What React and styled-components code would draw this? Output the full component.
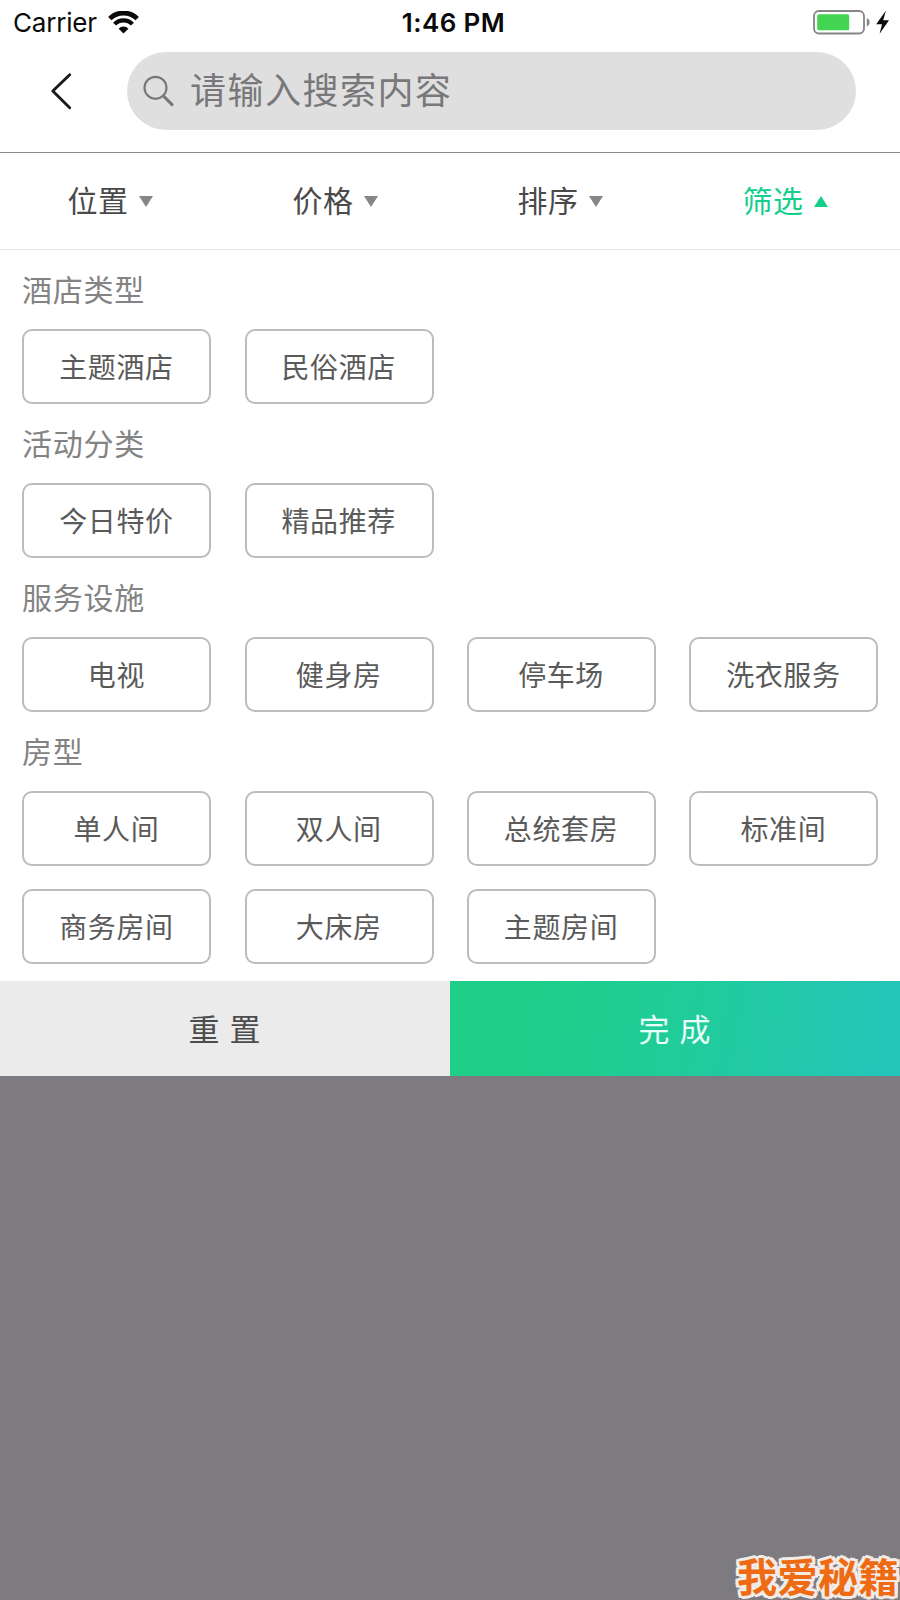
import React from "react";
import styled, { createGlobalStyle } from "styled-components";

const GlobalStyle = createGlobalStyle`
  * { box-sizing: border-box; }
  body {
    margin: 0;
    background: #7d7b80;
    font-family: "Noto Sans CJK SC", sans-serif;
  }
  button { font: inherit; margin: 0; padding: 0; border: 0; background: none; }
`;

const Screen = styled.div`
  position: relative;
  display: flex;
  flex-direction: column;
  width: 900px;
  height: 1600px;
  overflow: hidden;
  background: #7d7b80;
`;

const StatusBar = styled.header`
  display: grid;
  grid-template-columns: 1fr auto 1fr;
  align-items: center;
  height: 44px;
  padding: 0 10px 0 13px;
  background: #fff;
  color: #0a0a0a;
  font: 400 26px/44px Inter, sans-serif;
`;

const StatusText = styled.span`
  padding-top: 1px;
  height: 44px;
`;

const Carrier = styled.div`
  display: flex;
  align-items: center;
  gap: 11px;
  letter-spacing: -0.2px;
`;

const Clock = styled(StatusText)`
  font-weight: 600;
  letter-spacing: 0.4px;
  padding-left: 4px;
`;

const Power = styled.div`
  display: flex;
  justify-content: flex-end;
`;

const NavBar = styled.nav`
  display: flex;
  align-items: center;
  height: 109px;
  padding: 8px 44px 22px 50px;
  border-bottom: 1px solid #8a8a8a;
  background: #fff;
`;

const BackButton = styled.button`
  display: flex;
  width: 76.5px;
`;

const SearchField = styled.div`
  display: flex;
  align-items: center;
  flex: 1;
  height: 78px;
  padding-left: 16.5px;
  gap: 15px;
  border-radius: 39px;
  background: #dfdfdf;
  color: #78787a;
  font-size: 36px;
  line-height: 72px;
  letter-spacing: 1.5px;
`;

const Placeholder = styled.span`
  height: 78px;
`;

const Tabs = styled.div`
  display: grid;
  grid-template-columns: repeat(4, 1fr);
  height: 97px;
  border-bottom: 1px solid #e3e3e3;
  background: #fff;
`;

const Tab = styled.button`
  display: flex;
  align-items: center;
  justify-content: center;
  gap: 11px;
  padding-right: 4px;
  color: ${(p) => (p.$active ? "#14ce8c" : "#4a4a4a")};
  font-size: 30px;
  letter-spacing: 0.4px;
`;

const TabLabel = styled.span`
  padding-bottom: 4px;
  line-height: 40px;
`;

const Arrow = styled.span`
  width: 0;
  height: 0;
  border: 7.5px solid transparent;
  ${(p) =>
    p.$up
      ? "border-top: 0; border-bottom: 11px solid #14ce8c;"
      : "border-bottom: 0; border-top: 11px solid #868686;"}
`;

const FilterPanel = styled.main`
  height: 731px;
  padding: 0 21.6px 0 22.4px;
  background: #fff;
`;

const Group = styled.section`
  height: 154px;
  padding-top: 16px;
`;

const GroupTitle = styled.h2`
  margin: 0 0 18px -0.5px;
  height: 45px;
  color: #838383;
  font-size: 30px;
  font-weight: 400;
  line-height: 45px;
  letter-spacing: 0.8px;
`;

const Options = styled.div`
  display: grid;
  grid-template-columns: repeat(4, 189px);
  justify-content: space-between;
  row-gap: 23px;
`;

const Option = styled.button`
  height: 75px;
  padding: 0 1px 1px 0;
  border: 2px solid #bcbcbc;
  border-radius: 10px;
  color: #5a5a5a;
  font-size: 28px;
  line-height: 68px;
  letter-spacing: 0.6px;
`;

const Actions = styled.footer`
  display: grid;
  grid-template-columns: 1fr 1fr;
  height: 95px;
`;

const Action = styled.button`
  padding: 0 1px 2px 0;
  background: ${(p) =>
    p.$primary ? "linear-gradient(100deg, #1fce88 15%, #20cc98 50%, #22c6b8 95%)" : "#ebebeb"};
  color: ${(p) => (p.$primary ? "#e8fff8" : "#4c4c4c")};
  font-size: 31px;
  line-height: 91px;
  word-spacing: 3px;
`;

const Watermark = styled.div`
  position: absolute;
  right: 1px;
  bottom: -1px;
  color: #ee6b14;
  font-family: "Liberation Sans", "Noto Sans CJK SC", sans-serif;
  font-size: 40px;
  font-weight: 700;
  line-height: 46px;
  letter-spacing: 0.5px;
  text-shadow: 3px 0 #f1ece8, -3px 0 #f1ece8, 0 3px #f1ece8, 0 -3px #f1ece8,
    3px 2px #f1ece8, -3px 2px #f1ece8, 3px -2px #f1ece8, -3px -2px #f1ece8;
`;

const WifiIcon = () => (
  <svg width="31" height="23" viewBox="0 0 31 23" fill="none" stroke="#0a0a0a">
    <path d="M1.8 7.6A19.5 19.5 0 0 1 29.2 7.6" strokeWidth="4.8" />
    <path d="M6.6 13.1A12.4 12.4 0 0 1 24.4 13.1" strokeWidth="4.2" />
    <path d="M15.5 22.6L10.6 17.7A6.7 6.7 0 0 1 20.4 17.7Z" fill="#0a0a0a" stroke="none" />
  </svg>
);

const BatteryIcon = () => (
  <svg width="77" height="26" viewBox="0 0 77 26">
    <rect x="1" y="2" width="50" height="22.5" rx="5" fill="none" stroke="#858585" strokeWidth="1.8" />
    <rect x="4.2" y="5.3" width="32" height="16" rx="1.6" fill="#43d551" />
    <path d="M53.8 9.3Q56.6 10.2 56.6 13.3Q56.6 16.4 53.8 17.4Z" fill="#858585" />
    <path d="M72.8 1.8L63.2 15.3H69L66.6 24.7L76 11.2H70.2Z" fill="#0a0a0a" />
  </svg>
);

const BackIcon = () => (
  <svg width="24" height="38" viewBox="0 0 24 38" fill="none" stroke="#1a1a1a" strokeWidth="2.9" strokeLinecap="round">
    <path d="M19.7 2.7L2.8 19L19.7 35.7" strokeLinejoin="round" />
  </svg>
);

const SearchIcon = () => (
  <svg width="32" height="32" viewBox="0 0 32 32" fill="none" stroke="#78787a">
    <circle cx="12.5" cy="12.8" r="11" strokeWidth="2.2" />
    <path d="M20.5 21L29 29.6" strokeWidth="3.2" strokeLinecap="round" />
  </svg>
);

const tabs = ["位置", "价格", "排序", "筛选"];

const groups = [
  { title: "酒店类型", options: ["主题酒店", "民俗酒店"] },
  { title: "活动分类", options: ["今日特价", "精品推荐"] },
  { title: "服务设施", options: ["电视", "健身房", "停车场", "洗衣服务"] },
  {
    title: "房型",
    options: ["单人间", "双人间", "总统套房", "标准间", "商务房间", "大床房", "主题房间"],
  },
];

export default function App() {
  const active = "筛选";
  return (
    <>
      <GlobalStyle />
      <Screen>
        <StatusBar>
          <Carrier>
            <StatusText>Carrier</StatusText>
            <WifiIcon />
          </Carrier>
          <Clock>1:46 PM</Clock>
          <Power>
            <BatteryIcon />
          </Power>
        </StatusBar>
        <NavBar>
          <BackButton aria-label="返回">
            <BackIcon />
          </BackButton>
          <SearchField>
            <SearchIcon />
            <Placeholder>请输入搜索内容</Placeholder>
          </SearchField>
        </NavBar>
        <Tabs>
          {tabs.map((name) => (
            <Tab key={name} $active={name === active}>
              <TabLabel>{name}</TabLabel>
              <Arrow $up={name === active} />
            </Tab>
          ))}
        </Tabs>
        <FilterPanel>
          {groups.map((group) => (
            <Group key={group.title}>
              <GroupTitle>{group.title}</GroupTitle>
              <Options>
                {group.options.map((name) => (
                  <Option key={name}>{name}</Option>
                ))}
              </Options>
            </Group>
          ))}
        </FilterPanel>
        <Actions>
          <Action>重 置</Action>
          <Action $primary>完 成</Action>
        </Actions>
        <Watermark>我爱秘籍</Watermark>
      </Screen>
    </>
  );
}
